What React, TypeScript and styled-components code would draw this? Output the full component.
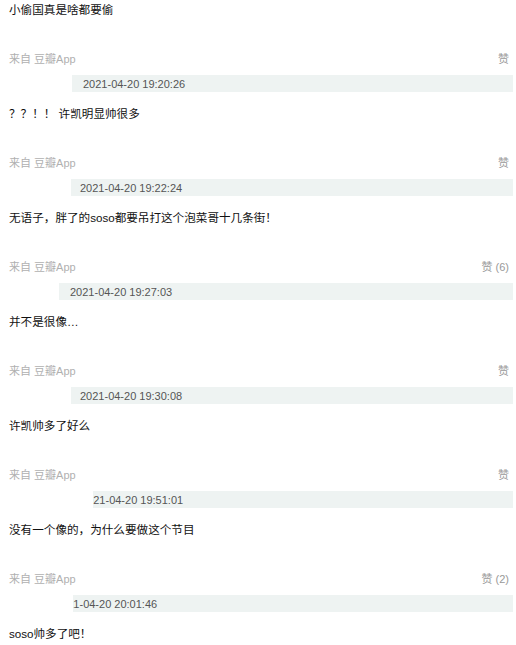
import styled, { createGlobalStyle } from "styled-components";

type Comment = {
    text: string;
    likes: number;
    date?: string;
    barLeft?: number;
    datePad?: number;
};

const comments: Comment[] = [
    { text: "小偷国真是啥都要偷", likes: 0, date: "2021-04-20 19:20:26", barLeft: 72, datePad: 11 },
    { text: "？？！！ 许凯明显帅很多", likes: 0, date: "2021-04-20 19:22:24", barLeft: 71, datePad: 9 },
    { text: "无语子，胖了的soso都要吊打这个泡菜哥十几条街！", likes: 6, date: "2021-04-20 19:27:03", barLeft: 59, datePad: 11 },
    { text: "并不是很像…", likes: 0, date: "2021-04-20 19:30:08", barLeft: 71, datePad: 9 },
    { text: "许凯帅多了好么", likes: 0, date: "2021-04-20 19:51:01", barLeft: 93, datePad: -12 },
    { text: "没有一个像的，为什么要做这个节目", likes: 2, date: "2021-04-20 20:01:46", barLeft: 73, datePad: -18 },
    { text: "soso帅多了吧！", likes: 0 },
];

const App = () => (
    <>
        <GlobalStyle />
        <Page>
            {comments.map((c, i) => (
                <Item key={i}>
                    <Content>{c.text}</Content>
                    {c.date && (
                        <>
                            <Meta>
                                <Source>来自 豆瓣App</Source>
                                <Like>{c.likes > 0 ? `赞 (${c.likes})` : "赞"}</Like>
                            </Meta>
                            <DateBar $left={c.barLeft ?? 72}>
                                <DateText $pad={c.datePad ?? 10}>{c.date}</DateText>
                            </DateBar>
                        </>
                    )}
                </Item>
            ))}
        </Page>
    </>
);

const GlobalStyle = createGlobalStyle`
    html, body {
        margin: 0;
        background: #fff;
    }
    body {
        font-family: "Liberation Sans", Arial, "Noto Sans CJK SC", sans-serif;
    }
`;

const Page = styled.div`
    width: 516px;
    box-sizing: border-box;
    padding: 0 3px 0 9px;
    display: flex;
    flex-direction: column;
`;

const Item = styled.div`
    display: flex;
    flex-direction: column;
    padding-bottom: 12px;
`;

const Content = styled.div`
    font-size: 11.6px;
    line-height: 20px;
    color: #111;
    white-space: nowrap;
`;

const Meta = styled.div`
    display: flex;
    justify-content: space-between;
    align-items: center;
    margin-top: 30px;
    padding-right: 4px;
    height: 16px;
    font-size: 11px;
`;

const Source = styled.span`
    color: #b0b0b0;
`;

const Like = styled.span`
    color: #999;
`;

const DateBar = styled.div<{ $left: number }>`
    margin-top: 9px;
    margin-left: ${({ $left }) => $left - 9}px;
    height: 17px;
    background: #eef3f2;
    overflow: hidden;
    display: flex;
    align-items: center;
`;

const DateText = styled.span<{ $pad: number }>`
    font-size: 11px;
    color: #555;
    white-space: nowrap;
    margin-left: ${({ $pad }) => $pad}px;
`;

export default App;
